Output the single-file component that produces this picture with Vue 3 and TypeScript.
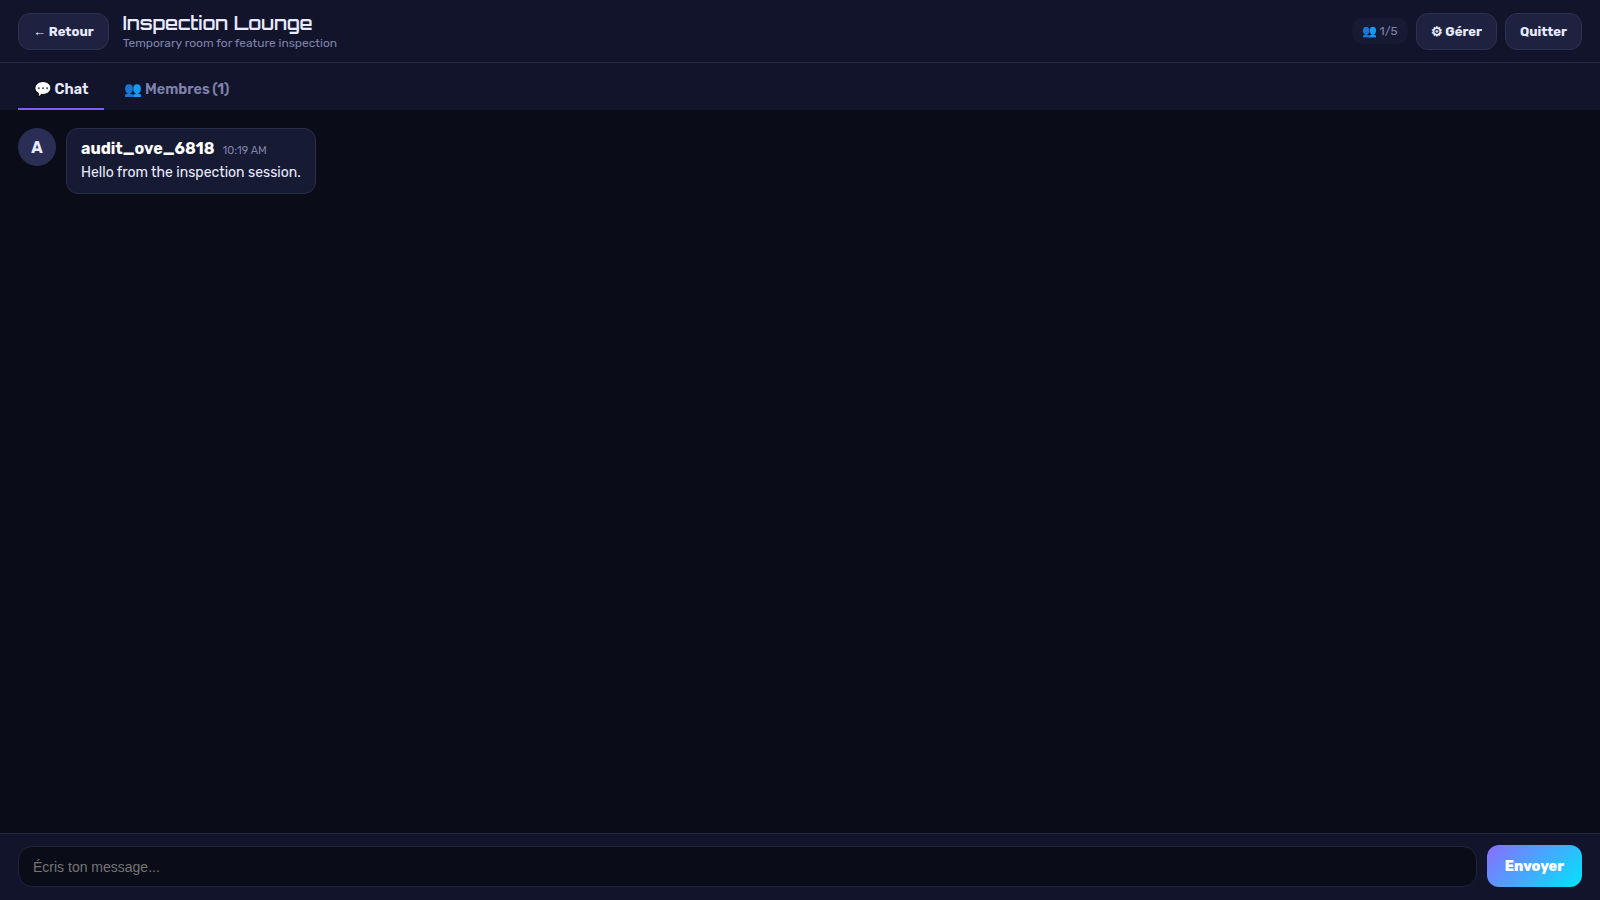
<script setup lang="ts">
import { ref } from 'vue'
const draft = ref('')
</script>

<template>
  <div class="room">
    <header class="top">
      <div class="left">
        <button class="btn">← Retour</button>
        <div class="titles">
          <h1>Inspection Lounge</h1>
          <p>Temporary room for feature inspection</p>
        </div>
      </div>
      <div class="right">
        <span class="count">👥 1/5</span>
        <button class="btn">⚙ Gérer</button>
        <button class="btn">Quitter</button>
      </div>
    </header>
    <nav class="tabs">
      <button class="tab active">💬 Chat</button>
      <button class="tab">👥 Membres (1)</button>
    </nav>
    <main class="msgs">
      <div class="msg">
        <div class="avatar">A</div>
        <div class="bubble">
          <div class="meta"><b>audit_ove_6818</b><span>10:19 AM</span></div>
          <div class="text">Hello from the inspection session.</div>
        </div>
      </div>
    </main>
    <footer class="composer">
      <input v-model="draft" placeholder="Écris ton message..." />
      <button class="send">Envoyer</button>
    </footer>
  </div>
</template>

<style>
body { margin: 0; background: #0a0c17; }
</style>

<style scoped>
.room { height: 900px; display: flex; flex-direction: column; background: #0a0c17; color: #e8eaff; font-family: Rubik, "Liberation Sans", sans-serif; overflow: hidden; }
.top { height: 63px; box-sizing: border-box; padding: 0 18px; display: flex; align-items: center; justify-content: space-between; background: #12142b; border-bottom: 1px solid #252842; }
.left, .right { display: flex; align-items: center; }
.left { gap: 14px; }
.right { gap: 8px; }
.btn { height: 37px; padding: 0 14px; border-radius: 12px; border: 1px solid #2d3250; background: #1e2240; color: #e8eaff; font-family: inherit; font-weight: 700; font-size: 13px; }
.titles { padding-bottom: 2px; }
h1 { margin: 0; font-family: Orbitron, Rubik, sans-serif; font-weight: 600; font-size: 18.8px; line-height: 24px; }
p { margin: 1px 0 0; font-size: 12px; color: #7f83ab; }
.count { padding: 6px 10px; border-radius: 10px; background: #171a33; color: #7f83ab; font-size: 12px; }
.tabs { height: 47px; box-sizing: border-box; padding: 8px 18px 0; display: flex; gap: 4px; background: #12142b; }
.tab { padding: 0 16px; background: none; border: 0; border-bottom: 2px solid transparent; color: #7f83ab; font-family: inherit; font-weight: 600; font-size: 14.4px; word-spacing: -0.6px; }
.tab.active { color: #e8eaff; border-bottom-color: #7c5cff; }
.msgs { flex: 1; padding: 18px; }
.msg { display: flex; gap: 10px; align-items: flex-start; }
.avatar { width: 38px; height: 38px; border-radius: 50%; background: #2a2e55; display: flex; align-items: center; justify-content: center; font-weight: 700; font-size: 16px; }
.bubble { padding: 10px 14px; border-radius: 12px; background: #171a33; border: 1px solid #2a2e4a; }
.meta { display: flex; align-items: baseline; gap: 8px; }
.meta b { font-weight: 700; font-size: 16px; color: #fff; }
.meta span { font-size: 11px; color: #7f83ab; }
.text { margin-top: 4px; font-size: 14px; line-height: 21px; }
.composer { height: 67px; box-sizing: border-box; padding: 11px 18px 13px; display: flex; align-items: flex-end; gap: 10px; background: #12142b; border-top: 1px solid #252842; }
input { flex: 1; height: 41px; box-sizing: border-box; border-radius: 14px; border: 1px solid #21243a; background: #0a0c17; padding: 0 14px; color: #fff; font: 14px "Liberation Sans", sans-serif; }
.send { width: 95px; height: 42px; border: 0; border-radius: 12px; background: linear-gradient(135deg, #8b6cff, #00e5ff); color: #fff; font-family: inherit; font-weight: 800; font-size: 14.2px; }
</style>
